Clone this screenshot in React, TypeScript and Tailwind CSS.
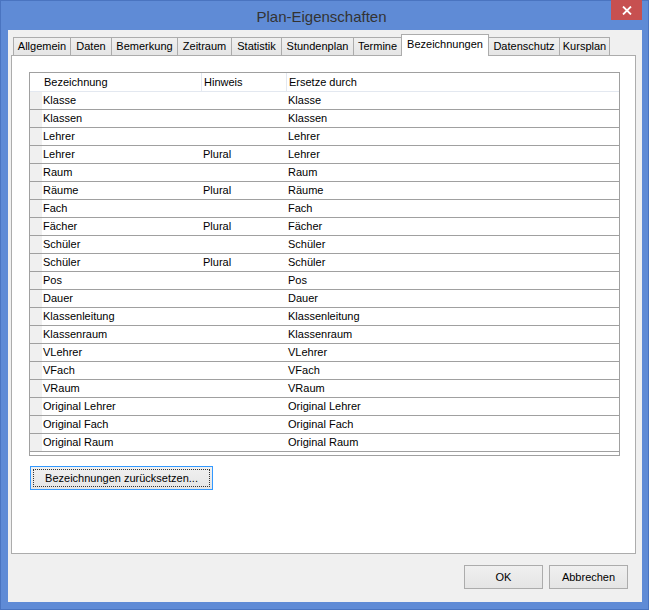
import React from "react";

const tabs = [
  { label: "Allgemein", w: "w-[58px]" },
  { label: "Daten", w: "w-[42px]" },
  { label: "Bemerkung", w: "w-[67px]" },
  { label: "Zeitraum", w: "w-[55px]" },
  { label: "Statistik", w: "w-[51px]" },
  { label: "Stundenplan", w: "w-[73px]" },
  { label: "Termine", w: "w-[49px]" },
  { label: "Bezeichnungen", w: "w-[88px]", active: true },
  { label: "Datenschutz", w: "w-[72px]" },
  { label: "Kursplan", w: "w-[51px]" },
];

const rows: [string, string, string][] = [
  ["Klasse", "", "Klasse"],
  ["Klassen", "", "Klassen"],
  ["Lehrer", "", "Lehrer"],
  ["Lehrer", "Plural", "Lehrer"],
  ["Raum", "", "Raum"],
  ["Räume", "Plural", "Räume"],
  ["Fach", "", "Fach"],
  ["Fächer", "Plural", "Fächer"],
  ["Schüler", "", "Schüler"],
  ["Schüler", "Plural", "Schüler"],
  ["Pos", "", "Pos"],
  ["Dauer", "", "Dauer"],
  ["Klassenleitung", "", "Klassenleitung"],
  ["Klassenraum", "", "Klassenraum"],
  ["VLehrer", "", "VLehrer"],
  ["VFach", "", "VFach"],
  ["VRaum", "", "VRaum"],
  ["Original Lehrer", "", "Original Lehrer"],
  ["Original Fach", "", "Original Fach"],
  ["Original Raum", "", "Original Raum"],
];

function TabStrip() {
  return (
    <div className="flex items-end h-[21px] pl-[2px]">
      {tabs.map((t, i) =>
        t.active ? (
          <div
            key={t.label}
            className={`${t.w} -ml-px h-[22px] -mb-px relative z-10 bg-white border border-b-0 border-[#acacac] flex items-center justify-center pb-[2px]`}
          >
            {t.label}
          </div>
        ) : (
          <div
            key={t.label}
            className={`${t.w} ${i === 0 ? "" : "-ml-px"} h-[18px] bg-gradient-to-b from-[#f0f0f0] to-[#e5e5e5] border border-b-0 border-[#acacac] flex items-center justify-center`}
          >
            {t.label}
          </div>
        )
      )}
    </div>
  );
}

function Grid() {
  return (
    <div className="ml-[17px] mt-[16px] w-[591px] h-[384px] border border-[#a0a0a0] bg-white">
      <div className="grid grid-cols-[12px_160px_85px_1fr] h-[19px] border-b border-[#e3e8f0]">
        <div />
        <div className="pl-[2px] pt-px leading-[17px] border-r border-[#e3e8f0]">Bezeichnung</div>
        <div className="pl-[2px] pt-px leading-[17px] border-r border-[#e3e8f0]">Hinweis</div>
        <div className="pl-[2px] pt-px leading-[17px]">Ersetze durch</div>
      </div>
      {rows.map(([a, b, c], i) => (
        <div key={i} className="grid grid-cols-[12px_160px_85px_1fr] h-[18px] border-b border-[#a0a0a0]">
          <div className="bg-[#f0f0f0]" />
          <div className="pl-px leading-[17px]">{a}</div>
          <div className="pl-px leading-[17px]">{b}</div>
          <div className="pl-px leading-[17px]">{c}</div>
        </div>
      ))}
    </div>
  );
}

export default function App() {
  return (
    <div
      className="w-[649px] h-[610px] bg-[#5f8bd6] border border-[#4a74c0] flex flex-col text-[11px] text-black"
      style={{ fontFamily: '"Liberation Sans", Arial, sans-serif' }}
    >
      <div className="h-[29px] flex">
        <div className="flex-1" />
        <div className="text-[15px] text-[#333333] leading-[29px] pt-[1px]">Plan-Eigenschaften</div>
        <div className="flex-1 flex justify-end items-start pr-[6px]">
          <div className="w-[31px] h-[20px] -mt-px bg-[#c75050] flex items-center justify-center">
            <svg width="10" height="9" viewBox="0 0 10 9">
              <path d="M1 0.5 L9 8.5 M9 0.5 L1 8.5" stroke="white" strokeWidth="1.8" />
            </svg>
          </div>
        </div>
      </div>
      <div className="ml-[7px] mr-[6px] h-[572px] bg-[#f0f0f0] flex flex-col pt-[4px] px-[3px]">
        <TabStrip />
        <div className="w-[625px] h-[499px] border border-[#acacac] bg-white flex flex-col">
          <Grid />
          <button className="ml-[18px] mt-[10px] w-[183px] h-[24px] border border-[#3399ff] bg-gradient-to-b from-[#f0f0f0] to-[#e5e5e5] p-[2px] flex">
            <div className="flex-1 border border-dotted border-[#333] flex items-center justify-center">
              Bezeichnungen zurücksetzen...
            </div>
          </button>
        </div>
        <div className="flex justify-end gap-[6px] mt-[11px] pr-[11px]">
          <button className="w-[79px] h-[24px] border border-[#acacac] bg-gradient-to-b from-[#f0f0f0] to-[#e5e5e5]">OK</button>
          <button className="w-[79px] h-[24px] border border-[#acacac] bg-gradient-to-b from-[#f0f0f0] to-[#e5e5e5]">Abbrechen</button>
        </div>
      </div>
    </div>
  );
}
